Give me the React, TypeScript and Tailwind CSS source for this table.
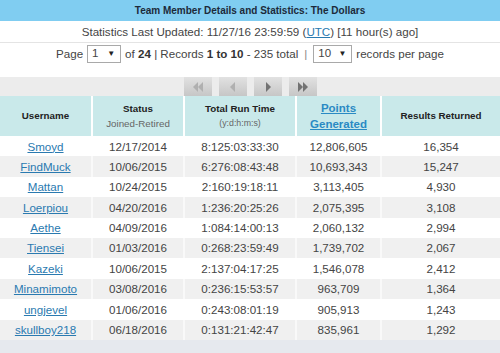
import React from "react";

const rows = [
  ["Smoyd", "12/17/2014", "8:125:03:33:30", "12,806,605", "16,354"],
  ["FindMuck", "10/06/2015", "6:276:08:43:48", "10,693,343", "15,247"],
  ["Mattan", "10/24/2015", "2:160:19:18:11", "3,113,405", "4,930"],
  ["Loerpiou", "04/20/2016", "1:236:20:25:26", "2,075,395", "3,108"],
  ["Aethe", "04/09/2016", "1:084:14:00:13", "2,060,132", "2,994"],
  ["Tiensei", "01/03/2016", "0:268:23:59:49", "1,739,702", "2,067"],
  ["Kazeki", "10/06/2015", "2:137:04:17:25", "1,546,078", "2,412"],
  ["Minamimoto", "03/08/2016", "0:236:15:53:57", "963,709", "1,364"],
  ["ungjevel", "01/06/2016", "0:243:08:01:19", "905,913", "1,243"],
  ["skullboy218", "06/18/2016", "0:131:21:42:47", "835,961", "1,292"],
];

function NavBtn({ kind, disabled }: { kind: "first" | "prev" | "next" | "last"; disabled?: boolean }) {
  const c = disabled ? "#b0b0b0" : "#727272";
  return (
    <div className="w-[28px] h-[19px] flex items-center justify-center bg-gradient-to-b from-[#e2e2e2] to-[#c6c6c6]">
      <svg width="14" height="12" viewBox="0 0 14 12">
        {kind === "first" && (
          <>
            <polygon points="7,1 2,6 7,11" fill={c} />
            <polygon points="12,1 7,6 12,11" fill={c} />
          </>
        )}
        {kind === "prev" && <polygon points="9,1 4,6 9,11" fill={c} />}
        {kind === "next" && <polygon points="5,1 10,6 5,11" fill={c} />}
        {kind === "last" && (
          <>
            <polygon points="2,1 7,6 2,11" fill={c} />
            <polygon points="7,1 12,6 7,11" fill={c} />
          </>
        )}
      </svg>
    </div>
  );
}

function Select({ value, w }: { value: string; w: string }) {
  return (
    <span className={`inline-flex items-center justify-between h-[18px] border border-[#a9a9a9] bg-white pl-[4px] pr-[5px] text-[11.5px] text-[#444] ${w}`}>
      <span>{value}</span>
      <span className="text-[8px] text-[#222]">▼</span>
    </span>
  );
}

export default function App() {
  return (
    <div className="w-[500px] h-[353px] bg-[#e6e9ee] overflow-hidden" style={{ fontFamily: '"Liberation Sans", Arial, sans-serif' }}>
      <div className="bg-white">
        <div className="h-[21px] bg-[#80cdf1] flex items-center justify-center text-[10px] font-bold text-[#1c2a3a]">
          Team Member Details and Statistics: The Dollars
        </div>
        <div className="h-[22px] flex items-center justify-center text-[11.6px] text-[#444] border-b border-[#e4e4e4]">
          Statistics Last Updated: 11/27/16 23:59:59 (<span className="text-[#2a7ab0] underline">UTC</span>) [11 hour(s) ago]
        </div>
        <div className="h-[22px] flex items-center justify-center gap-[4px] text-[11.6px] text-[#444]">
          <span>Page</span>
          <Select value="1" w="w-[34px]" />
          <span>
            of <b className="text-[#333]">24</b> | Records <b className="text-[#333]">1 to 10</b> - 235 total
          </span>
          <span className="mx-[2px] text-[#888]">|</span>
          <Select value="10" w="w-[39px]" />
          <span>records per page</span>
        </div>
        <div className="h-[12px]" />
        <div className="h-[19px] bg-[#ececec] flex items-center justify-center gap-[7px]">
          <NavBtn kind="first" disabled />
          <NavBtn kind="prev" disabled />
          <NavBtn kind="next" />
          <NavBtn kind="last" />
        </div>
        <table className="w-[500px] border-collapse table-fixed">
          <colgroup>
            <col className="w-[92px]" />
            <col className="w-[92px]" />
            <col className="w-[112px]" />
            <col className="w-[85px]" />
            <col className="w-[119px]" />
          </colgroup>
          <thead>
            <tr className="h-[40px] bg-[#c9e9ea] text-[9.8px] text-[#222]">
              <th className="font-bold">Username</th>
              <th className="border-l-2 border-white leading-[15px]">
                <div className="font-bold">Status</div>
                <div className="font-normal text-[#666]">Joined-Retired</div>
              </th>
              <th className="border-l-2 border-white leading-[15px]">
                <div className="font-bold">Total Run Time</div>
                <div className="font-normal text-[8.8px] text-[#666]">(y:d:h:m:s)</div>
              </th>
              <th className="border-l-2 border-white leading-[16px] text-[11.5px] font-bold">
                <span className="text-[#2a8ac4] underline">
                  Points
                  <br />
                  Generated
                </span>
              </th>
              <th className="border-l-2 border-white font-bold">Results Returned</th>
            </tr>
          </thead>
          <tbody>
            {rows.map((r, i) => (
              <tr key={i} className={`h-[20.4px] text-[11.6px] text-[#444] text-center ${i % 2 === 0 ? "bg-white" : "bg-[#f0f0f0]"}`}>
                <td className="p-0">
                  <span className="text-[#2a7ab0] underline">{r[0]}</span>
                </td>
                <td className="p-0 border-l-2 border-white/60">{r[1]}</td>
                <td className="p-0 border-l-2 border-white/60">{r[2]}</td>
                <td className="p-0 border-l-2 border-white/60">{r[3]}</td>
                <td className="p-0 border-l-2 border-white/60">{r[4]}</td>
              </tr>
            ))}
          </tbody>
        </table>
      </div>
    </div>
  );
}
